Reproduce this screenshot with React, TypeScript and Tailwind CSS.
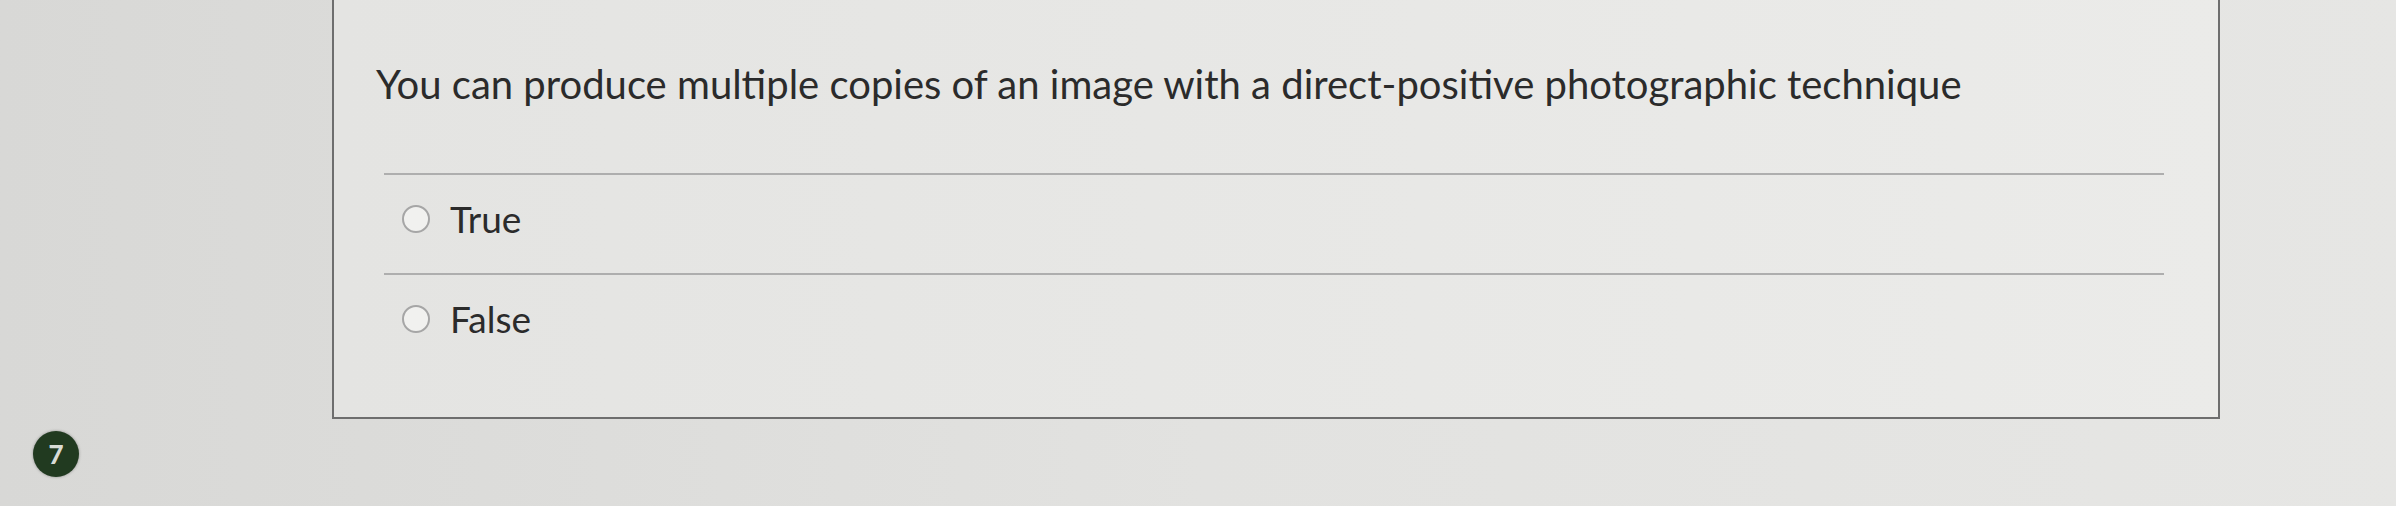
import React from "react";

const options = ["True", "False"];

export default function App() {
  return (
    <div
      className="relative w-full h-[506px] overflow-hidden bg-gradient-to-r from-[#d8d8d6] via-[#e2e2e0] to-[#e6e6e4] text-[#2f2f2f]"
      style={{ fontFamily: "Lato, 'Open Sans', sans-serif" }}
    >
      <div className="flex">
        <div className="w-[332px] shrink-0 h-[506px] flex flex-col justify-end pb-[29px] pl-[33px]">
          <div className="w-[46px] h-[46px] rounded-full bg-[#213a20] flex items-center justify-center text-[#d8dcd6] text-[26px] font-black shadow-[0_0_3px_rgba(0,0,0,0.35)]">
            7
          </div>
        </div>

        <div className="w-[1888px] h-[419px] border-x-2 border-b-2 border-[#6e6e6e] bg-gradient-to-r from-[#e4e4e2] to-[#ebebe9]">
          <div className="pl-[42px] pt-[58px] h-[173px]">
            <p className="text-[40px] leading-[52px] text-[#2b2b2b]">
              You can produce multiple copies of an image with a direct-positive photographic technique
            </p>
          </div>

          <ul className="pl-[50px] pr-[54px]">
            {options.map((opt) => (
              <li
                key={opt}
                className="border-t-2 border-[#aeaeae] h-[100px] flex items-center gap-[20px] pl-[18px] pb-[10px]"
              >
                <span className="w-[28px] h-[28px] rounded-full border-2 border-[#a6a6a6] bg-[#f1f1ef]" />
                <span className="text-[37px] text-[#2b2b2b]">{opt}</span>
              </li>
            ))}
          </ul>
        </div>
      </div>
    </div>
  );
}
